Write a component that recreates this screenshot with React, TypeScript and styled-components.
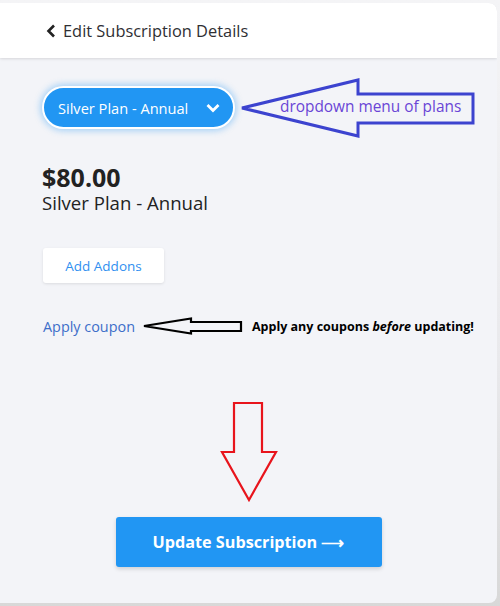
import React from 'react';
import styled, { createGlobalStyle } from 'styled-components';

const GlobalStyle = createGlobalStyle`
  html, body {
    margin: 0;
    padding: 0;
    background: #dcdcdc;
  }
  body {
    font-family: "Open Sans", "Noto Sans", Arial, sans-serif;
  }
`;

const Frame = styled.div`
  width: 500px;
  height: 606px;
  box-sizing: border-box;
  padding: 3px 3px 3px 0;
  background: linear-gradient(to bottom, #f4f4f6 0%, #e9e9ec 60%, #d8d8d8 100%);
`;

const Card = styled.div`
  height: 100%;
  display: flex;
  flex-direction: column;
  background: #f3f4f8;
  border-radius: 0 8px 8px 0;
  overflow: hidden;
`;

const Header = styled.header`
  height: 55px;
  flex-shrink: 0;
  display: flex;
  align-items: center;
  gap: 7px;
  padding-left: 46px;
  background: #fff;
  border-radius: 0 8px 0 0;
  box-shadow: 0 1px 3px rgba(0, 0, 0, 0.12);
  color: #2f2f33;
  font-size: 16.4px;
`;

const Body = styled.main`
  flex: 1;
  display: flex;
  flex-direction: column;
  padding: 20px 0 37px 42px;
`;

const DropdownRow = styled.div`
  height: 59px;
  display: flex;
  align-items: center;
  gap: 5px;
`;

const PlanSelect = styled.button`
  width: 193px;
  height: 43px;
  box-sizing: border-box;
  display: flex;
  align-items: center;
  justify-content: space-between;
  padding: 0 13px 0 14px;
  border: 2px solid #fff;
  border-radius: 22px;
  background: #2196f3;
  box-shadow: 0 0 6px 2px rgba(33, 150, 243, 0.35);
  color: #fff;
  font-family: inherit;
  font-size: 14.6px;
  cursor: pointer;
`;

const Annotation = styled.div`
  position: relative;
  width: 236px;
  height: 60px;
`;

const AnnotationText = styled.span<{ $top: number; $left: number; $color: string }>`
  position: absolute;
  top: ${p => p.$top}px;
  left: ${p => p.$left}px;
  color: ${p => p.$color};
  font-size: 15.4px;
  white-space: nowrap;
`;

const Price = styled.div`
  margin-top: 26px;
  color: #222;
  font-size: 25px;
  font-weight: 700;
  line-height: 28px;
`;

const PlanName = styled.div`
  margin-top: 1px;
  color: #222;
  font-size: 18.6px;
  line-height: 22px;
`;

const AddonsButton = styled.button`
  align-self: flex-start;
  margin: 34px 0 0 1px;
  width: 121px;
  height: 35px;
  border: none;
  border-radius: 3px;
  background: #fff;
  box-shadow: 0 1px 3px rgba(0, 0, 0, 0.1);
  color: #2f8ff0;
  font-family: inherit;
  font-size: 13.5px;
  cursor: pointer;
`;

const CouponRow = styled.div`
  margin: 34px 0 0 1px;
  height: 18px;
  display: flex;
  align-items: center;
`;

const CouponLink = styled.a`
  color: #3d6ec9;
  font-size: 14.4px;
  text-decoration: none;
  cursor: pointer;
  margin-right: 8px;
`;

const Note = styled.span`
  margin-left: 9px;
  color: #000;
  font-size: 12.5px;
  font-weight: 700;
  white-space: nowrap;
`;

const Bottom = styled.div`
  margin-left: -42px;
  display: flex;
  flex-direction: column;
  align-items: center;
  margin-top: 67px;
`;

const UpdateButton = styled.button`
  margin-top: 15px;
  width: 266px;
  height: 50px;
  border: none;
  border-radius: 3px;
  background: #2196f3;
  box-shadow: 0 2px 4px rgba(0, 0, 0, 0.15);
  color: #fff;
  font-family: inherit;
  font-size: 16.2px;
  font-weight: 700;
  cursor: pointer;
`;

const BackIcon = () => (
  <svg width="10" height="14" viewBox="0 0 10 14">
    <path d="M8 1.5 L2.5 7 L8 12.5" fill="none" stroke="#222" strokeWidth="2.6" />
  </svg>
);

const ChevronDown = () => (
  <svg width="14" height="10" viewBox="0 0 14 10">
    <path d="M1.5 2 L7 7.5 L12.5 2" fill="none" stroke="#fff" strokeWidth="2.8" />
  </svg>
);

const BlueArrow = () => (
  <svg width="236" height="60" viewBox="0 0 236 60">
    <path
      d="M2 30 L118 2 L118 16 L233 16 L233 45 L118 45 L118 58 Z"
      fill="none"
      stroke="#3c43cf"
      strokeWidth="3"
      strokeLinejoin="miter"
    />
  </svg>
);

const BlackArrow = () => (
  <svg width="100" height="18" viewBox="0 0 100 18">
    <path d="M1 9 L48 1.5 L48 5 L98 5 L98 14 L48 14 L48 16.5 Z" fill="none" stroke="#000" strokeWidth="2.2" />
  </svg>
);

const RedArrow = () => (
  <svg width="60" height="100" viewBox="0 0 60 100">
    <path d="M15 1 L43 1 L43 50 L57 50 L30 98 L3 50 L15 50 Z" fill="none" stroke="#e8141c" strokeWidth="2.2" />
  </svg>
);

export default function App() {
  return (
    <>
      <GlobalStyle />
      <Frame>
        <Card>
          <Header>
            <BackIcon />
            Edit Subscription Details
          </Header>
          <Body>
            <DropdownRow>
              <PlanSelect>
                Silver Plan - Annual
                <ChevronDown />
              </PlanSelect>
              <Annotation>
                <BlueArrow />
                <AnnotationText $top={18} $left={40} $color="#6a45d6">
                  dropdown menu of plans
                </AnnotationText>
              </Annotation>
            </DropdownRow>
            <Price>$80.00</Price>
            <PlanName>Silver Plan - Annual</PlanName>
            <AddonsButton>Add Addons</AddonsButton>
            <CouponRow>
              <CouponLink>Apply coupon</CouponLink>
              <BlackArrow />
              <Note>
                Apply any coupons <i>before</i> updating!
              </Note>
            </CouponRow>
            <Bottom>
              <RedArrow />
              <UpdateButton>Update Subscription ⟶</UpdateButton>
            </Bottom>
          </Body>
        </Card>
      </Frame>
    </>
  );
}
